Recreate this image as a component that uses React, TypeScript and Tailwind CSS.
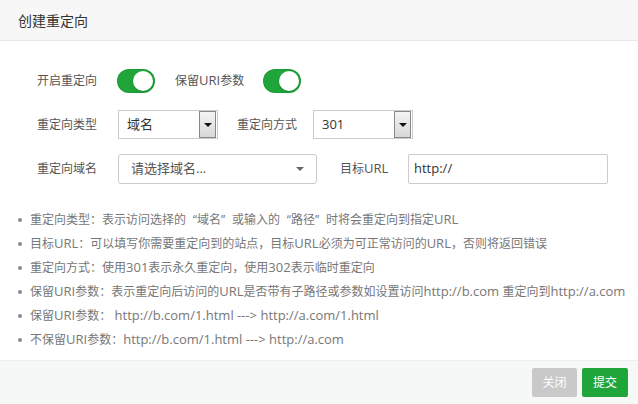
import React from "react";

const font = { fontFamily: '"Open Sans", "Noto Sans CJK SC", sans-serif' };

// latin runs render a touch larger than the CJK text, like the YaHei original
function Mixed({ text }: { text: string }) {
  const parts = text.split(/([\x20-\x7E]+)/).filter(Boolean);
  return (
    <>
      {parts.map((p, i) =>
        /^[\x20-\x7E]+$/.test(p) ? (
          <span key={i} className="text-[13px]">
            {p}
          </span>
        ) : (
          <span key={i}>{p}</span>
        )
      )}
    </>
  );
}

function Toggle() {
  return (
    <div className="relative w-[36px] h-[22px] rounded-full bg-[#20a53a] shadow-[0_0_0_1px_#1d9a35]">
      <span className="absolute right-[1px] top-[1px] w-[20px] h-[20px] rounded-full bg-white shadow" />
    </div>
  );
}

function NativeSelect({ value }: { value: string }) {
  return (
    <div className="flex items-center w-[100px] h-[29px] border border-[#cccccc] bg-white">
      <span className="flex-1 pl-[8px] text-[13px] text-[#333]">{value}</span>
      <span className="flex items-center justify-center w-[17px] h-[27px] mr-[1px] border border-[#888] bg-gradient-to-b from-[#f4f4f4] to-[#d8d8d8]">
        <span className="w-0 h-0 border-l-[4px] border-r-[4px] border-t-[4px] border-l-transparent border-r-transparent border-t-[#111]" />
      </span>
    </div>
  );
}

function OpenQ() {
  return <span className="inline-block w-[11px] text-right">“</span>;
}
function CloseQ() {
  return <span className="inline-block w-[11px] text-left">”</span>;
}

const tips: React.ReactNode[] = [
  <>
    重定向类型：表示访问选择的<OpenQ />域名<CloseQ />或输入的<OpenQ />路径<CloseQ />时将会重定向到指定<Mixed text="URL" />
  </>,
  <Mixed text="目标URL：可以填写你需要重定向到的站点，目标URL必须为可正常访问的URL，否则将返回错误" />,
  <Mixed text="重定向方式：使用301表示永久重定向，使用302表示临时重定向" />,
  <Mixed text="保留URI参数：表示重定向后访问的URL是否带有子路径或参数如设置访问http://b.com 重定向到http://a.com" />,
  <Mixed text="保留URI参数： http://b.com/1.html ---> http://a.com/1.html" />,
  <Mixed text="不保留URI参数：http://b.com/1.html ---> http://a.com" />,
];

export default function App() {
  return (
    <div className="w-[638px] h-[404px] flex flex-col bg-white overflow-hidden" style={font}>
      {/* header */}
      <div className="h-[41px] shrink-0 flex items-center pl-[18px] bg-[#f7f7f7] border-b border-[#e6e6e6] text-[14px] text-[#333]">
        创建重定向
      </div>

      {/* body */}
      <div className="flex-1 flex flex-col pt-[28px]">
        <div className="flex items-center h-[24px] pl-[37px] text-[12px] text-[#555]">
          <span className="w-[81px]">开启重定向</span>
          <Toggle />
          <span className="ml-[21px] w-[89px]">
            <Mixed text="保留URI参数" />
          </span>
          <Toggle />
        </div>

        <div className="flex items-center h-[29px] mt-[17px] pl-[37px] text-[12px] text-[#555]">
          <span className="w-[81px]">重定向类型</span>
          <NativeSelect value="域名" />
          <span className="ml-[19px] w-[76px]">重定向方式</span>
          <NativeSelect value="301" />
        </div>

        <div className="flex items-center h-[30px] mt-[15px] pl-[37px] text-[12px] text-[#555]">
          <span className="w-[81px]">重定向域名</span>
          <div className="flex items-center justify-between w-[199px] h-[30px] rounded-[3px] border border-[#cccccc] pl-[12px] pr-[12px]">
            <span className="text-[13px] text-[#555]">请选择域名...</span>
            <span className="w-0 h-0 border-l-[4px] border-r-[4px] border-t-[4px] border-l-transparent border-r-transparent border-t-[#666]" />
          </div>
          <span className="ml-[23px] w-[68px]">
            <Mixed text="目标URL" />
          </span>
          <div className="flex items-center w-[200px] h-[30px] rounded-[2px] border border-[#cccccc] pl-[5px] text-[13px] text-[#333]">
            http://
          </div>
        </div>

        <ul className="mt-[27px] pl-[18px] flex flex-col gap-[6.5px] text-[12px] text-[#777]">
          {tips.map((t, i) => (
            <li key={i} className="flex items-center h-[17.5px] whitespace-pre">
              <span className="w-[4px] h-[4px] rounded-full bg-[#888] mr-[8px] shrink-0" />
              <span>{t}</span>
            </li>
          ))}
        </ul>
      </div>

      {/* footer */}
      <div className="h-[44px] shrink-0 flex items-center justify-end gap-[5px] pr-[10px] bg-[#f6f8f8] border-t border-[#eeeeee]">
        <button className="w-[45px] h-[29px] rounded-[2px] bg-[#c9c9c9] text-white text-[12px]">关闭</button>
        <button className="w-[46px] h-[29px] rounded-[2px] bg-[#20a53a] text-white text-[12px]">提交</button>
      </div>
    </div>
  );
}
